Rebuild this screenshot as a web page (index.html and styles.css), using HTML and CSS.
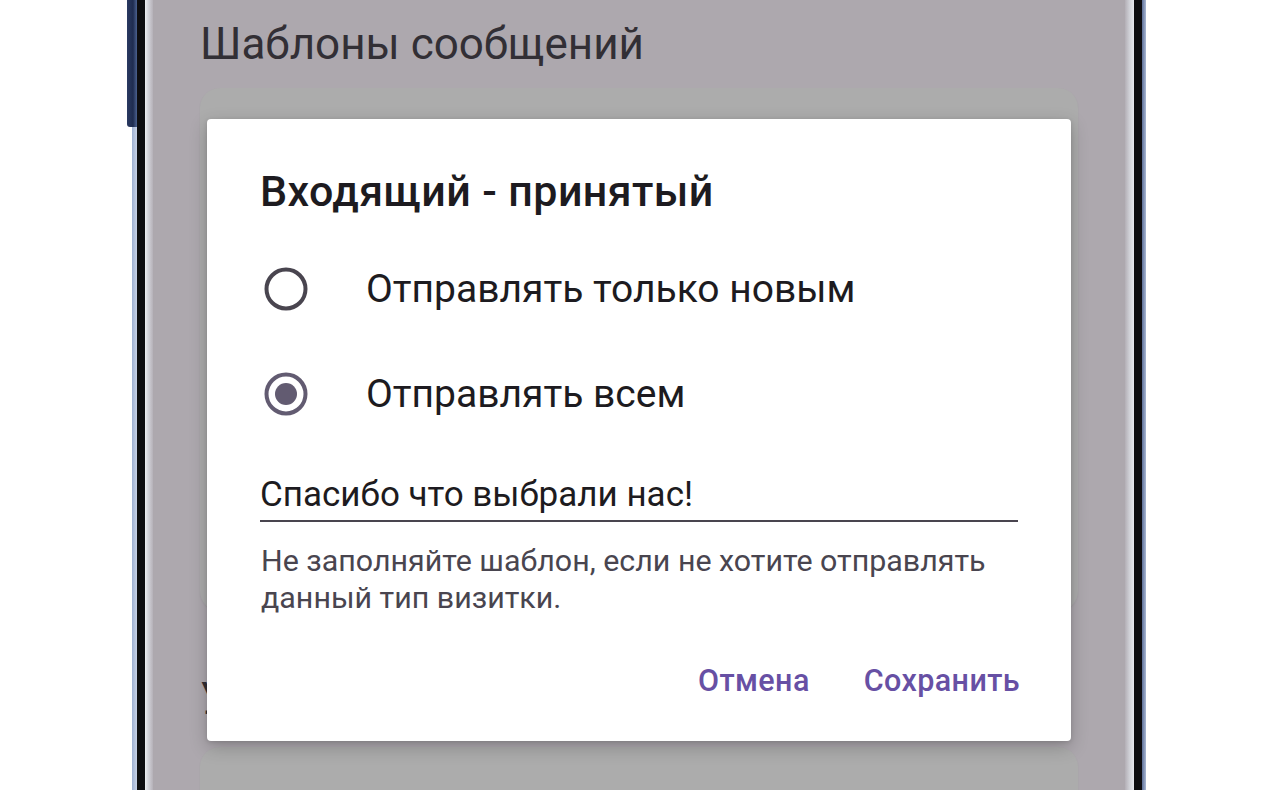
FILE: index.html
```html
<!DOCTYPE html>
<html lang="ru">
<head>
<meta charset="utf-8">
<title>Шаблоны сообщений</title>
<link rel="stylesheet" href="styles.css">
</head>
<body>
<div class="device">
  <div class="edge-left">
    <div class="side-button"></div>
    <div class="edge-line"></div>
  </div>
  <div class="bezel-black"></div>
  <div class="bezel-light"></div>
  <main class="screen">
    <h1 class="screen-title">Шаблоны сообщений</h1>
    <section class="card card-main"></section>
    <h2 class="screen-title section-title">Уведомления</h2>
    <section class="card card-next"></section>

    <div class="dialog" role="dialog">
      <h3 class="dialog-title">Входящий - принятый</h3>
      <label class="radio-row">
        <svg class="radio" width="48" height="48" viewBox="0 0 48 48"><circle cx="24" cy="24" r="19.5" fill="none" stroke="#49454f" stroke-width="4"/></svg>
        <span class="radio-label">Отправлять только новым</span>
      </label>
      <label class="radio-row">
        <svg class="radio" width="48" height="48" viewBox="0 0 48 48"><circle cx="24" cy="24" r="19.5" fill="none" stroke="#625b71" stroke-width="4"/><circle cx="24" cy="24" r="11" fill="#625b71"/></svg>
        <span class="radio-label">Отправлять всем</span>
      </label>
      <div class="field">Спасибо что выбрали нас!</div>
      <p class="helper">Не заполняйте шаблон, если не хотите отправлять данный тип визитки.</p>
      <div class="actions">
        <span class="btn">Отмена</span>
        <span class="btn">Сохранить</span>
      </div>
    </div>
  </main>
  <div class="bezel-light right"></div>
  <div class="bezel-black"></div>
  <div class="edge-right"></div>
</div>
</body>
</html>
```

FILE: styles.css
```css
* { box-sizing: border-box; }
html, body { margin: 0; padding: 0; }
body {
  background: #ffffff;
  width: 1277px;
  height: 790px;
  overflow: hidden;
  font-family: Roboto, "Noto Sans", sans-serif;
}
.device {
  display: flex;
  height: 790px;
  margin-left: 127px;
  width: 1022px;
}
.edge-left {
  width: 10px;
  display: flex;
  flex-direction: column;
}
.side-button {
  height: 127px;
  width: 10px;
  background: linear-gradient(90deg, #2a3a62 0%, #1f2c50 60%, #4b6190 100%);
  border-radius: 0 0 0 3px;
}
.edge-line {
  flex: 1;
  margin-left: 5px;
  background: linear-gradient(90deg, #9eb0d2, #c9d3e6);
}
.bezel-black {
  width: 8px;
  background: #0d0d10;
}
.bezel-light {
  width: 8px;
  background: linear-gradient(90deg, #eceef2 0%, #d3d3da 40%, #b5b1b8 100%);
}
.bezel-light.right {
  width: 9px;
  background: linear-gradient(90deg, #b3afb6 0%, #cfd0d6 50%, #e6e8ee 100%);
}
.edge-right {
  width: 4px;
  background: linear-gradient(90deg, #5d7098, #a9b7d3);
}
.screen {
  position: relative;
  width: 972px;
  background: #ada8ae;
  padding: 19px 47px 0 47px;
  overflow: hidden;
}
.screen-title {
  margin: 0;
  font-size: 44px;
  line-height: 50px;
  font-weight: 400;
  color: #322f35;
}
.card {
  background: #acacac;
  border-radius: 20px;
  box-shadow: 0 1px 2px rgba(0,0,0,0.06);
}
.card-main {
  margin-top: 19px;
  height: 523px;
}
.section-title {
  margin-top: 63px;
}
.card-next {
  margin-top: 23px;
  height: 120px;
}
.dialog {
  position: absolute;
  left: 54px;
  top: 119px;
  width: 864px;
  height: 622px;
  background: #ffffff;
  border-radius: 4px;
  box-shadow: 0 6px 18px rgba(0,0,0,0.22), 0 1px 4px rgba(0,0,0,0.12);
  padding: 47px 53px 0 54px;
  color: #1d1b20;
}
.dialog-title {
  margin: 0 0 0 -1px;
  font-size: 43px;
  line-height: 50px;
  font-weight: 500;
  letter-spacing: 0.4px;
  color: #1d1b20;
}
.radio-row {
  display: flex;
  align-items: center;
  height: 105px;
}
.radio-row:first-of-type { margin-top: 20px; }
.radio {
  flex: none;
  margin-left: 1px;
  display: block;
}
.radio-label {
  margin-left: 56px;
  font-size: 39px;
  line-height: 46px;
}
.field {
  margin-top: 28px;
  margin-left: -1px;
  font-size: 35px;
  line-height: 41px;
  padding-bottom: 5px;
  border-bottom: 2px solid #49454f;
  white-space: nowrap;
}
.helper {
  margin: 20px 0 0 0;
  font-size: 30.4px;
  line-height: 37px;
  color: #49454f;
}
.actions {
  display: flex;
  justify-content: flex-end;
  gap: 54px;
  margin-top: 47px;
  margin-right: -2px;
}
.btn {
  font-size: 30.5px;
  line-height: 36px;
  font-weight: 500;
  color: #6750a4;
  letter-spacing: 0.4px;
}
```
